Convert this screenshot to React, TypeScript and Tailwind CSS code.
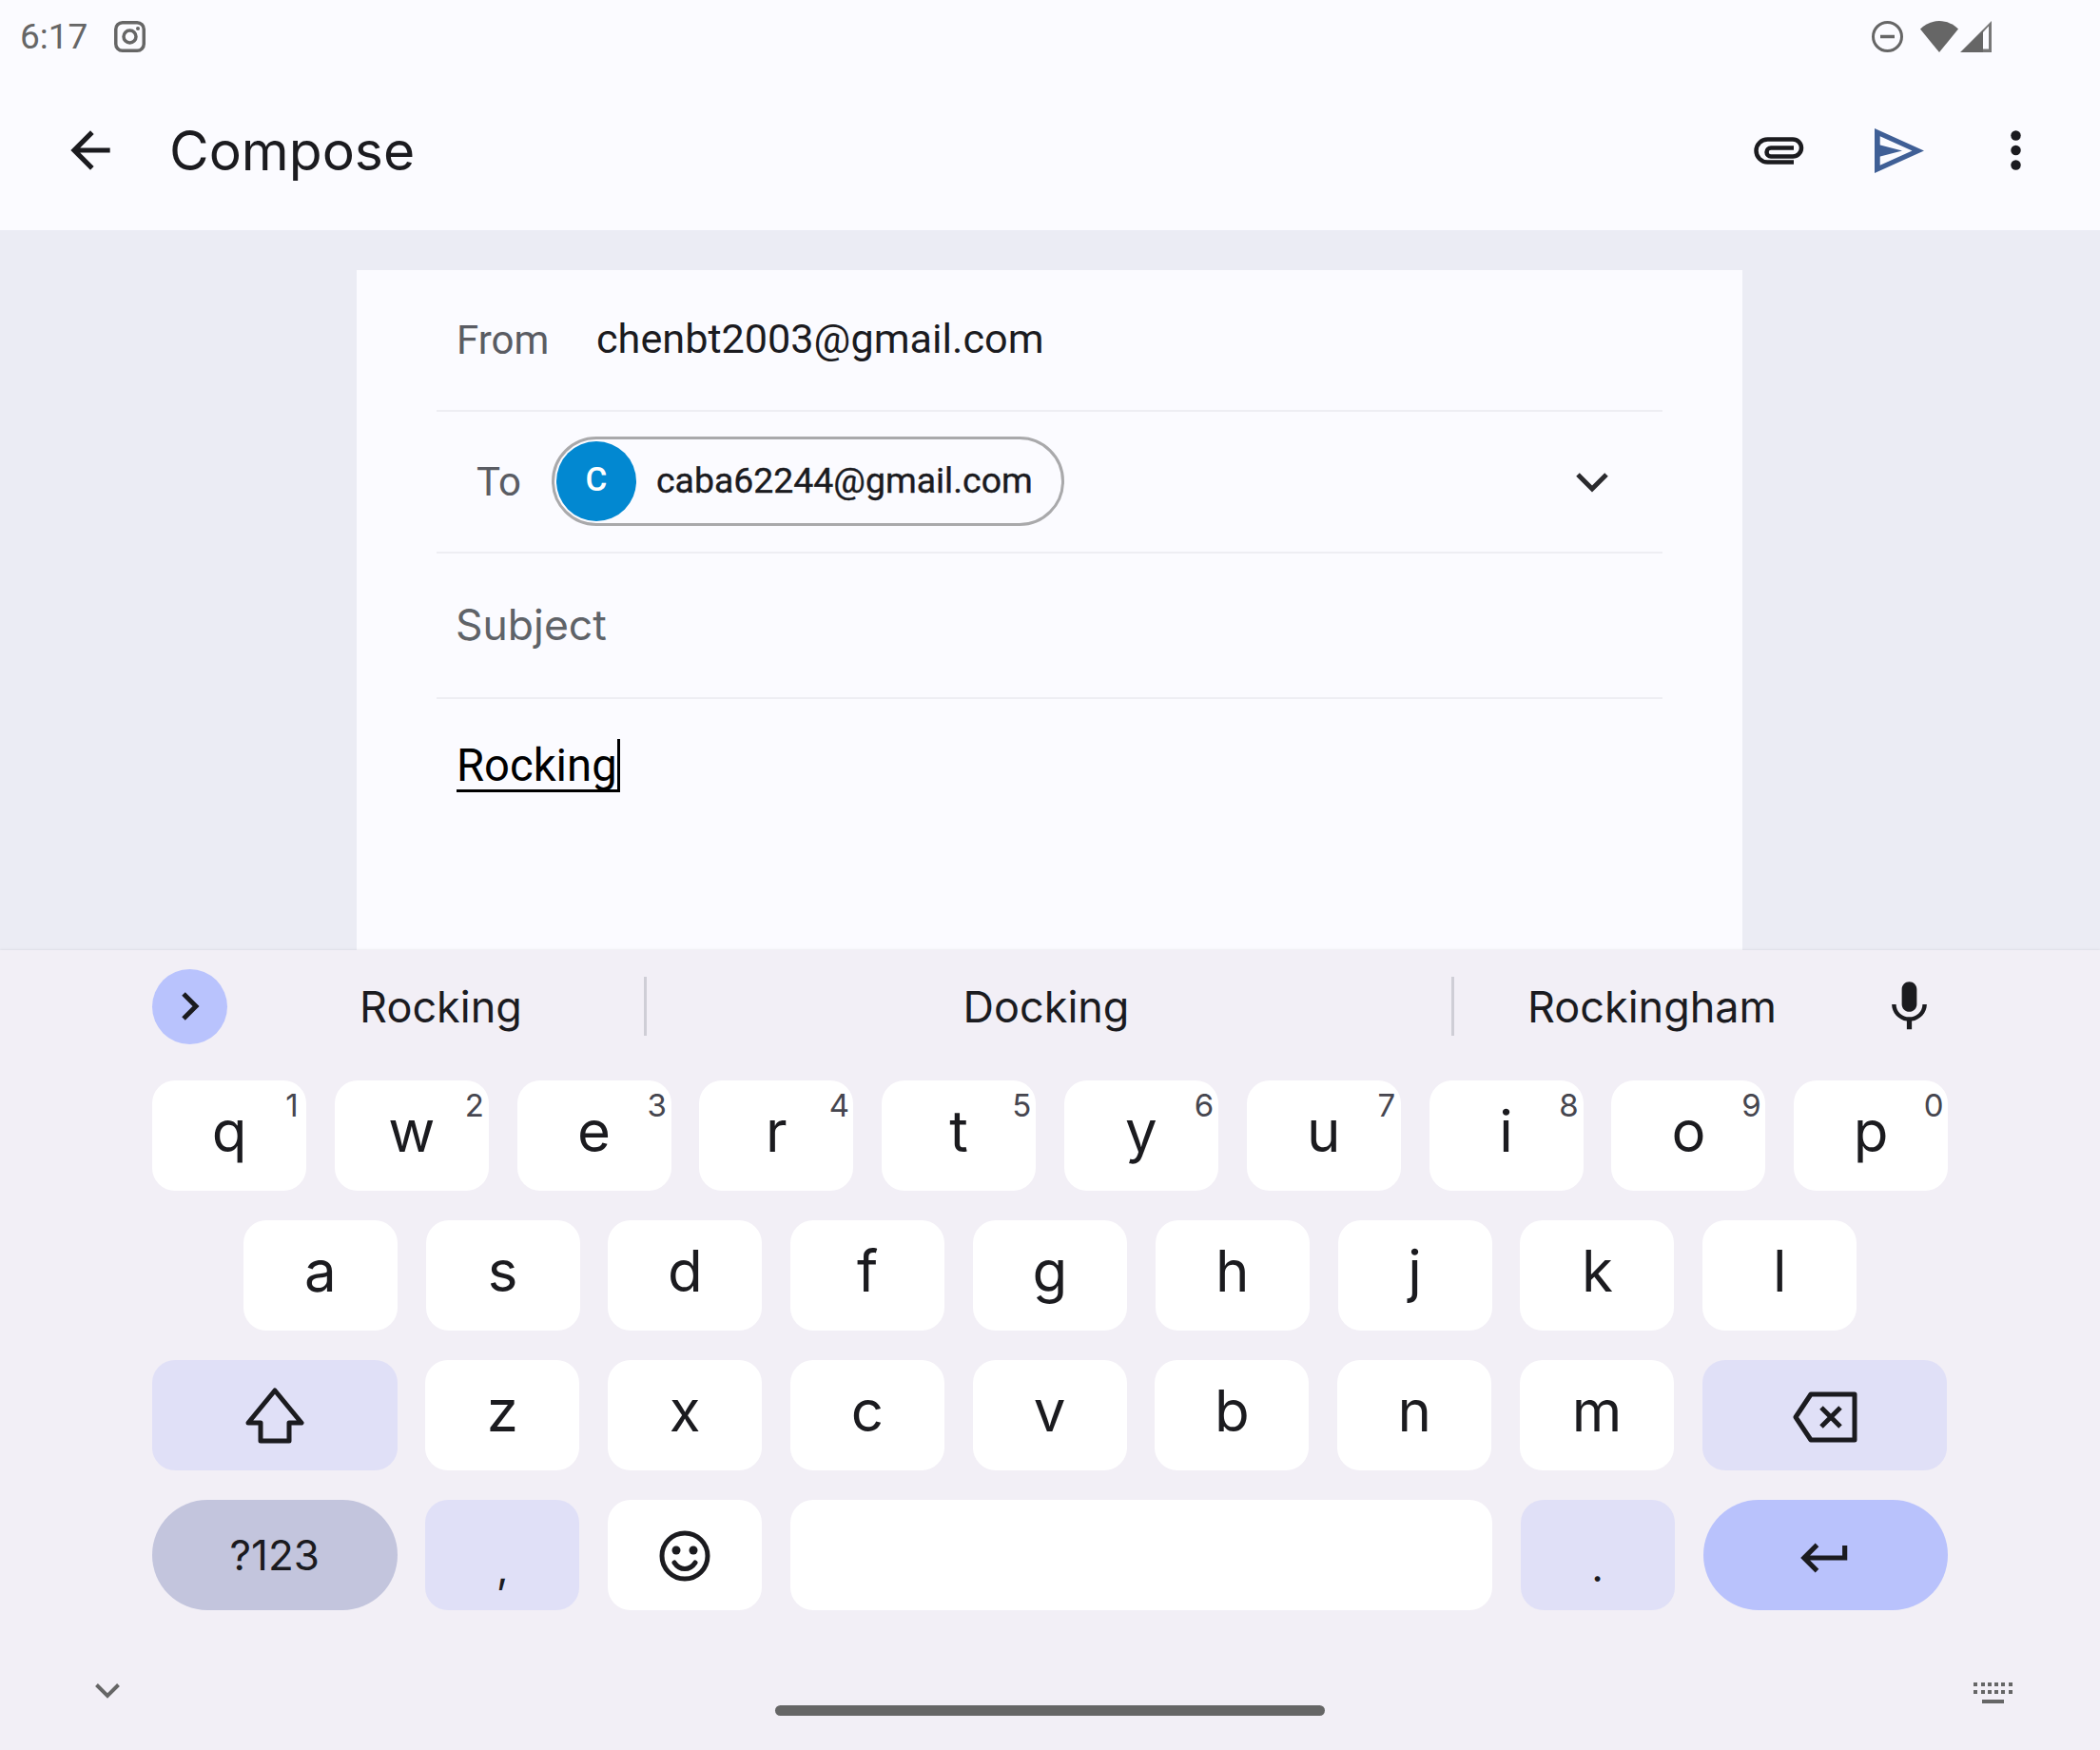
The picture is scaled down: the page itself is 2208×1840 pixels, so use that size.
const sans = "font-['Inter','Open_Sans',sans-serif]"
const roboto = "font-['Roboto',sans-serif]"

const topRow = ["q", "w", "e", "r", "t", "y", "u", "i", "o", "p"]
const middleRow = ["a", "s", "d", "f", "g", "h", "j", "k", "l"]
const bottomRow = ["z", "x", "c", "v", "b", "n", "m"]
const keyBase = "flex items-center justify-center shrink-0 h-[116px] rounded-[24px]"

function LetterKey({ label, hint }: { label: string; hint?: number }) {
  return (
    <div className={`${keyBase} relative w-[162px] bg-white`}>
      <span className={`${sans} text-[60px] leading-none text-[#1b1b1f] pb-[10px]`}>{label}</span>
      {hint !== undefined && (
        <span className={`${sans} absolute right-[3px] top-[6px] w-[24px] text-center text-[33px] leading-[40px] text-[#46464f]`}>{hint}</span>
      )}
    </div>
  )
}

function StatusBar() {
  return (
    <div className="flex h-[76px] items-center pl-[21px] pr-[113px] text-[#666666]">
      <span className={`${roboto} w-[99px] text-[37px] leading-none`}>6:17</span>
      <svg width="33" height="33" viewBox="0 0 33 33" fill="none" stroke="currentColor" strokeWidth="3.5">
        <rect x="1.75" y="1.75" width="29.5" height="29.5" rx="7" />
        <circle cx="16.5" cy="16.5" r="6.5" />
        <circle cx="25" cy="8" r="2" fill="currentColor" stroke="none" />
      </svg>
      <div className="ml-auto flex items-center">
        <svg width="33" height="33" viewBox="0 0 33 33" fill="none" stroke="currentColor" strokeWidth="3">
          <circle cx="16.5" cy="16.5" r="15" />
          <path d="M9 16.5h15" strokeWidth="3.5" />
        </svg>
        <svg className="ml-[18px]" width="40" height="33" viewBox="0 0 40 33" fill="currentColor">
          <path d="M0 8.5C5 3.5 12 0 20 0s15 3.5 20 8.5L20 33z" />
        </svg>
        <svg className="ml-[2px]" width="34" height="33" viewBox="0 0 34 33">
          <path d="M33 0v33H0z" fill="#777777" />
          <path d="M24 12l6-6.500V29.500h-6z" fill="#fbfbff" />
          <path d="M1 33L24 10v23z" fill="#666666" />
        </svg>
      </div>
    </div>
  )
}

function Toolbar() {
  return (
    <div className="flex h-[166px] items-center pb-[2px] pl-[64px] pr-[83px] text-[#1b1b1f]">
      <svg width="62" height="62" viewBox="0 0 24 24" fill="currentColor">
        <path d="M20 11H7.83l5.59-5.59L12 4l-8 8 8 8 1.41-1.41L7.83 13H20v-2z" />
      </svg>
      <span className={`${sans} ml-[52px] text-[57px] leading-none`}>Compose</span>
      <div className="ml-auto flex items-center">
        <svg width="53" height="29" viewBox="0 0 53 29" fill="none" stroke="currentColor" strokeWidth="4.5">
          <path d="M42 26.500H14.500A12 12 0 0 1 14.500 2.500H41A9 9 0 0 1 41 20.500H18A4.500 4.500 0 0 1 18 11.500H42" />
        </svg>
        {/* outlined send: ring plus the wedge tied to its left edge */}
        <svg className="ml-[74px]" width="52" height="47" viewBox="0 0 52 47" fill="#3f5f96">
          <path fillRule="evenodd" d="M0 0L52 23.500 0 47zM5.700 8.300V38.700L39.500 23.500z" />
          <path d="M5 17.300L29 23.500 5 29.700z" />
        </svg>
        <svg className="ml-[91px]" width="11" height="42" viewBox="0 0 11 42" fill="currentColor">
          <circle cx="5.500" cy="5.500" r="5.250" />
          <circle cx="5.500" cy="21" r="5.250" />
          <circle cx="5.500" cy="36.500" r="5.250" />
        </svg>
      </div>
    </div>
  )
}

function ComposeCard() {
  return (
    <div className="ml-[375px] mt-[42px] flex h-full w-[1457px] flex-col bg-[#fbfbff] px-[84px]">
      <div className="flex h-[149px] shrink-0 items-center border-b-2 border-[#eeeef3] pl-[21px]">
        <span className={`${roboto} w-[147px] text-[42px] text-[#5a5c63]`}>From</span>
        <span className={`${roboto} text-[43.200px] text-[#1b1b1f]`}>chenbt2003@gmail.com</span>
      </div>
      <div className="relative flex h-[149px] shrink-0 items-center border-b-2 border-[#eeeef3] pl-[42px]">
        <span className={`${roboto} w-[79px] text-[42px] text-[#5a5c63]`}>To</span>
        <div className="mb-[2px] flex h-[94px] w-[539px] items-center rounded-full border-[3px] border-[#a9a9ab] pl-[2px]">
          <div className={`${roboto} flex h-[84px] w-[84px] items-center justify-center rounded-full bg-[#0288d1] text-[35px] font-medium text-white`}>
            C
          </div>
          <span className={`${roboto} ml-[21px] text-[37.400px] text-[#1b1b1f] [-webkit-text-stroke:0.4px_#1b1b1f]`}>caba62244@gmail.com</span>
        </div>
        <svg className="ml-auto mr-[57px]" width="34" height="22" viewBox="0 0 34 22" fill="none" stroke="#2a2a2e" strokeWidth="5">
          <path d="M2 3l15 15L32 3" />
        </svg>
      </div>
      <div className="flex h-[153px] shrink-0 items-center border-b-2 border-[#eeeef3] pl-[20px]">
        <span className={`${sans} text-[44.500px] text-[#5f6368]`}>Subject</span>
      </div>
      <div className="pl-[21px] pt-[42px]">
        <div className="flex h-[56px] items-stretch">
          <span className={`${roboto} h-[56px] border-b-[3px] border-black pt-[1px] text-[47.200px] leading-[54px] text-black`}>Rocking</span>
          <span className="w-[3px] bg-black" />
        </div>
      </div>
    </div>
  )
}

function SuggestionStrip() {
  const suggestion = `${sans} text-center text-[45px] leading-none text-[#1b1b1f]`
  return (
    <div className="flex h-[137px] items-center pb-[19px] pl-[160px]">
      <div className="flex h-[79px] w-[79px] shrink-0 items-center justify-center rounded-full bg-[#b9c3fd]">
        <svg width="22" height="32" viewBox="0 0 22 32" fill="none" stroke="#1b1b1f" strokeWidth="5">
          <path d="M4 3l13 13L4 29" />
        </svg>
      </div>
      <span className={`${suggestion} w-[438px] pl-[11px]`}>Rocking</span>
      <div className="h-[62px] w-[3px] shrink-0 bg-[#cfced6]" />
      <span className={`${suggestion} w-[846px] pr-[6px]`}>Docking</span>
      <div className="h-[62px] w-[3px] shrink-0 bg-[#cfced6]" />
      <span className={`${suggestion} w-[422px] pr-[6px]`}>Rockingham</span>
      <svg className="ml-[25px]" width="63" height="63" viewBox="0 0 24 24" fill="#1b1b1f">
        <path d="M12 14c1.660 0 3-1.340 3-3V5c0-1.660-1.340-3-3-3S9 3.340 9 5v6c0 1.660 1.340 3 3 3zm5.300-3c0 3-2.540 5.100-5.300 5.100S6.700 14 6.700 11H5c0 3.410 2.720 6.230 6 6.720V21h2v-3.280c3.280-.48 6-3.300 6-6.720h-1.700z" />
      </svg>
    </div>
  )
}

function KeyRows() {
  return (
    <div className="flex flex-col gap-[31px] pl-[160px] pr-[160px]">
      <div className="flex gap-[29.800px]">
        {topRow.map((key, i) => (
          <LetterKey key={key} label={key} hint={(i + 1) % 10} />
        ))}
      </div>
      <div className="flex justify-center gap-[29.800px]">
        {middleRow.map((key) => (
          <LetterKey key={key} label={key} />
        ))}
      </div>
      <div className="flex gap-[29.800px]">
        <div className={`${keyBase} w-[257.500px] bg-[#e0e0f7]`}>
          <svg width="62" height="59" viewBox="0 0 62 59" fill="none" stroke="#1b1b1f" strokeWidth="5" strokeLinejoin="round">
            <path d="M31 3L59 37H46V56H16V37H3z" />
          </svg>
        </div>
        {bottomRow.map((key) => (
          <LetterKey key={key} label={key} />
        ))}
        <div className={`${keyBase} w-[257.500px] bg-[#e0e0f7] pt-[3px]`}>
          <svg width="68" height="54" viewBox="0 0 68 54" fill="none" stroke="#1b1b1f" strokeWidth="5" strokeLinejoin="round">
            <path d="M19 3H65V51H19L3 27z" />
            <path d="M30 17l20 20M50 17L30 37" />
          </svg>
        </div>
      </div>
      <div className="flex gap-[29.800px]">
        <div className={`${keyBase} w-[257.500px] rounded-full bg-[#c3c5dd]`}>
          <span className={`${sans} text-[44px] leading-none text-[#1b1b1f]`}>?123</span>
        </div>
        <div className={`${keyBase} w-[162px] bg-[#e0e0f7] pt-[25px]`}>
          <span className={`${sans} text-[44px] leading-none text-[#1b1b1f]`}>,</span>
        </div>
        <div className={`${keyBase} w-[162px] bg-white pt-[1px]`}>
          <svg width="54" height="54" viewBox="0 0 54 54" fill="none" stroke="#1b1b1f" strokeWidth="5">
            <circle cx="27" cy="27" r="24" />
            <circle cx="18" cy="21" r="4.500" fill="#1b1b1f" stroke="none" />
            <circle cx="36" cy="21" r="4.500" fill="#1b1b1f" stroke="none" />
            <path d="M16 34c3 4.500 7 6.500 11 6.500s8-2 11-6.500" strokeLinecap="round" />
          </svg>
        </div>
        <div className={`${keyBase} flex-1 bg-white`} />
        <div className={`${keyBase} w-[162px] bg-[#e0e0f7] pt-[24px]`}>
          <span className={`${sans} text-[44px] leading-none text-[#1b1b1f]`}>.</span>
        </div>
        <div className={`${keyBase} w-[257.500px] rounded-full bg-[#b9c2fc] pt-[5px]`}>
          <svg width="62" height="62" viewBox="0 0 24 24" fill="#1b1b1f">
            <path d="M19 7v4H5.830l3.580-3.590L8 6l-6 6 6 6 1.410-1.410L5.830 13H21V7z" />
          </svg>
        </div>
      </div>
    </div>
  )
}

function NavRow() {
  return (
    <div className="mt-[68px] grid grid-cols-[715px_578px_1fr] items-start pl-[100px] pr-[92px]">
      <svg className="mt-[9px]" width="26" height="16" viewBox="0 0 26 16" fill="none" stroke="#666666" strokeWidth="4">
        <path d="M1.500 1.500L13 13 24.500 1.500" />
      </svg>
      <div className="mt-[32px] h-[11px] rounded-full bg-[#666666]" />
      <svg className="mt-[8px] justify-self-end" width="41" height="22" viewBox="0 0 41 22" fill="#666666">
        <path d="M0 0h4v4H0zM8 0h4v4H8zM15 0h4v4h-4zM22 0h4v4h-4zM29 0h4v4h-4zM37 0h4v4h-4zM0 8h4v4H0zM8 8h4v4H8zM15 8h4v4h-4zM22 8h4v4h-4zM29 8h4v4h-4zM37 8h4v4h-4zM9 18h23v4H9z" />
      </svg>
    </div>
  )
}

export default function App() {
  return (
    <div className="flex h-[1840px] w-[2208px] flex-col overflow-hidden bg-[#ebecf4]">
      <header className="h-[242px] shrink-0 bg-[#fbfbff]">
        <StatusBar />
        <Toolbar />
      </header>
      <main className="min-h-0 flex-1 overflow-hidden">
        <ComposeCard />
      </main>
      <section className="h-[841px] shrink-0 bg-[#f2eff6] shadow-[0_-1px_2px_rgba(0,0,0,0.06)]">
        <SuggestionStrip />
        <KeyRows />
        <NavRow />
      </section>
    </div>
  )
}
